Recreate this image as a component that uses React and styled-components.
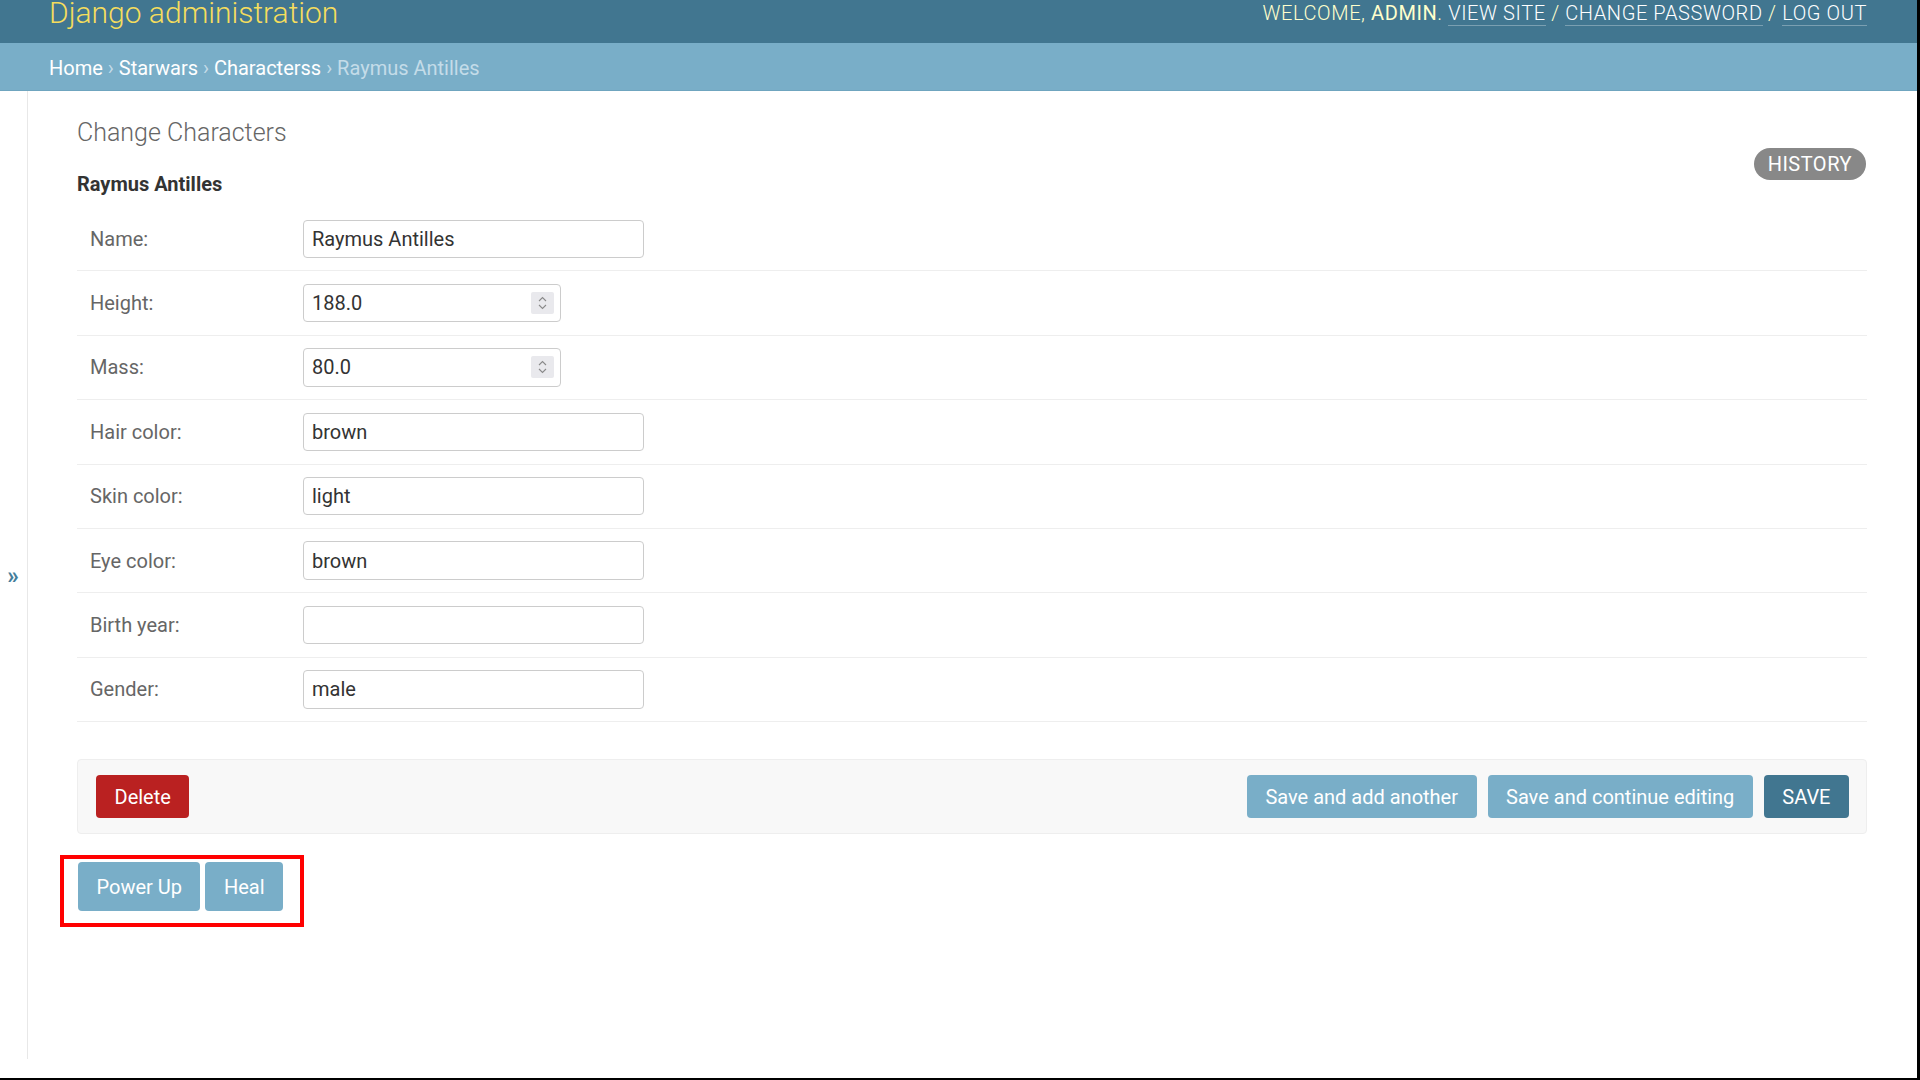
import React from "react";
import styled, { createGlobalStyle } from "styled-components";

const fields = [
    { label: "Name:", value: "Raymus Antilles" },
    { label: "Height:", value: "188.0", number: true },
    { label: "Mass:", value: "80.0", number: true },
    { label: "Hair color:", value: "brown" },
    { label: "Skin color:", value: "light" },
    { label: "Eye color:", value: "brown" },
    { label: "Birth year:", value: "" },
    { label: "Gender:", value: "male" },
];

const crumbs = ["Home", "Starwars", "Characterss"];

const Spin = () => (
    <Spinner>
        <svg width="23" height="22" viewBox="0 0 23 22">
            <path d="M8 9 L11.5 5.5 L15 9" fill="none" stroke="#8a8a8a" strokeWidth="1.1" />
            <path d="M8 13 L11.5 16.5 L15 13" fill="none" stroke="#8a8a8a" strokeWidth="1.1" />
        </svg>
    </Spinner>
);

const App = () => {
    return (
        <Frame>
            <GlobalStyle />
            <Header>
                <Branding>Django administration</Branding>
                <UserTools>
                    WELCOME, <strong>ADMIN</strong>. <a>VIEW SITE</a> / <a>CHANGE PASSWORD</a> / <a>LOG OUT</a>
                </UserTools>
            </Header>
            <Breadcrumbs>
                {crumbs.map((c) => (
                    <React.Fragment key={c}>
                        <a>{c}</a> ›{" "}
                    </React.Fragment>
                ))}
                Raymus Antilles
            </Breadcrumbs>
            <Main>
                <Toggle>»</Toggle>
                <Content>
                    <Title>Change Characters</Title>
                    <ObjectRow>
                        <ObjectName>Raymus Antilles</ObjectName>
                        <HistoryLink>HISTORY</HistoryLink>
                    </ObjectRow>
                    <Fieldset>
                        {fields.map((f) => (
                            <FormRow key={f.label}>
                                <Label>{f.label}</Label>
                                <InputWrap $number={f.number}>
                                    <Input type="text" defaultValue={f.value} readOnly />
                                    {f.number && <Spin />}
                                </InputWrap>
                            </FormRow>
                        ))}
                    </Fieldset>
                    <SubmitRow>
                        <Button $variant="danger">Delete</Button>
                        <Spacer />
                        <Button>Save and add another</Button>
                        <Button>Save and continue editing</Button>
                        <Button $variant="default">SAVE</Button>
                    </SubmitRow>
                    <ActionBox>
                        <Button $tall>Power Up</Button>
                        <Button $tall>Heal</Button>
                    </ActionBox>
                </Content>
            </Main>
        </Frame>
    );
};

const GlobalStyle = createGlobalStyle`
    html, body {
        margin: 0;
        padding: 0;
        background: #fff;
    }
    body {
        font-family: Roboto, "Liberation Sans", sans-serif;
        color: #333;
    }
    * {
        box-sizing: border-box;
    }
`;

const Frame = styled.div`
    width: 1920px;
    height: 1080px;
    border-right: 3px solid #000;
    border-bottom: 2px solid #000;
    overflow: hidden;
    background: #fff;
`;

const Header = styled.div`
    height: 43px;
    background: #417690;
    padding: 0 50px 0 49px;
    display: flex;
    justify-content: space-between;
    align-items: flex-start;
    overflow: hidden;
`;

const Branding = styled.div`
    font-size: 30px;
    line-height: 30px;
    font-weight: 300;
    color: #f5dd5d;
    margin-top: -2px;
`;

const UserTools = styled.div`
    font-size: 20px;
    line-height: 20px;
    font-weight: 300;
    letter-spacing: 0.6px;
    color: #ffc;
    margin-top: 3px;

    strong {
        font-weight: 400;
        color: #ffc;
    }
    a {
        color: #fff;
        border-bottom: 1px solid rgba(255, 255, 255, 0.3);
    }
`;

const Breadcrumbs = styled.div`
    height: 48px;
    background: #79aec8;
    border-bottom: 1px solid #6fa5bf;
    padding: 2px 0 0 49px;
    display: flex;
    align-items: center;
    white-space: pre;
    font-size: 20px;
    line-height: 24px;
    color: #c4dce8;

    a {
        color: #fff;
    }
`;

const Main = styled.div`
    display: flex;
    align-items: flex-start;
`;

const Toggle = styled.div`
    flex: 0 0 28px;
    height: 968px;
    border-right: 1px solid #e8e8e8;
    display: flex;
    align-items: center;
    justify-content: center;
    padding: 3px 1px 0 0;
    font-size: 23px;
    font-weight: 700;
    color: #447e9b;
`;

const Content = styled.div`
    flex: 1;
    padding: 27px 50px 0 49px;
`;

const Title = styled.h1`
    margin: 0;
    font-size: 25px;
    line-height: 30px;
    font-weight: 300;
    color: #666;
`;

const ObjectRow = styled.div`
    display: flex;
    justify-content: space-between;
    align-items: flex-start;
`;

const ObjectName = styled.h2`
    margin: 24px 0 0 0;
    font-size: 20px;
    line-height: 24px;
    font-weight: 700;
    color: #333;
`;

const HistoryLink = styled.a`
    height: 32px;
    padding: 0 14px;
    margin-right: 1px;
    border-radius: 16px;
    background: #888;
    color: #fff;
    font-size: 20px;
    letter-spacing: 0.5px;
    display: flex;
    align-items: center;
`;

const Fieldset = styled.div`
    margin-top: 11px;
`;

const FormRow = styled.div`
    display: flex;
    align-items: center;
    padding: 12.5px 12px 12.5px 13px;
    border-bottom: 1px solid #eee;
`;

const Label = styled.label`
    flex: 0 0 213px;
    font-size: 20px;
    color: #666;
`;

const InputWrap = styled.div`
    position: relative;
    width: ${(p) => (p.$number ? "258px" : "341px")};
`;

const Input = styled.input`
    width: 100%;
    height: 38.4px;
    border: 1px solid #ccc;
    border-radius: 4px;
    padding: 0 8px;
    font-family: Roboto, "Liberation Sans", sans-serif;
    font-size: 20px;
    color: #333;
    background: #fff;
    outline: none;
`;

const Spinner = styled.div`
    position: absolute;
    right: 7px;
    top: 50%;
    transform: translateY(-50%);
    width: 23px;
    height: 22px;
    background: #e9e9ed;
    border-radius: 2px;
    display: flex;
`;

const SubmitRow = styled.div`
    margin-top: 37px;
    height: 75px;
    padding: 0 17px 0 18px;
    background: #f8f8f8;
    border: 1px solid #eee;
    border-radius: 4px;
    display: flex;
    align-items: center;
    gap: 11px;
`;

const Spacer = styled.div`
    flex: 1;
`;

const Button = styled.button`
    height: ${(p) => (p.$tall ? "49px" : "43px")};
    padding: 0 18.5px;
    border: none;
    border-radius: 4px;
    font-family: Roboto, "Liberation Sans", sans-serif;
    font-size: 20px;
    color: #fff;
    cursor: pointer;
    background: ${(p) =>
        p.$variant === "danger" ? "#ba2121" : p.$variant === "default" ? "#417690" : "#79aec8"};
`;

const ActionBox = styled.div`
    margin: 21px 0 0 -17px;
    width: 244px;
    height: 72px;
    border: 4px solid #ff0000;
    padding: 3px 0 0 14px;
    display: flex;
    align-items: flex-start;
    gap: 5px;
`;

export default App;
